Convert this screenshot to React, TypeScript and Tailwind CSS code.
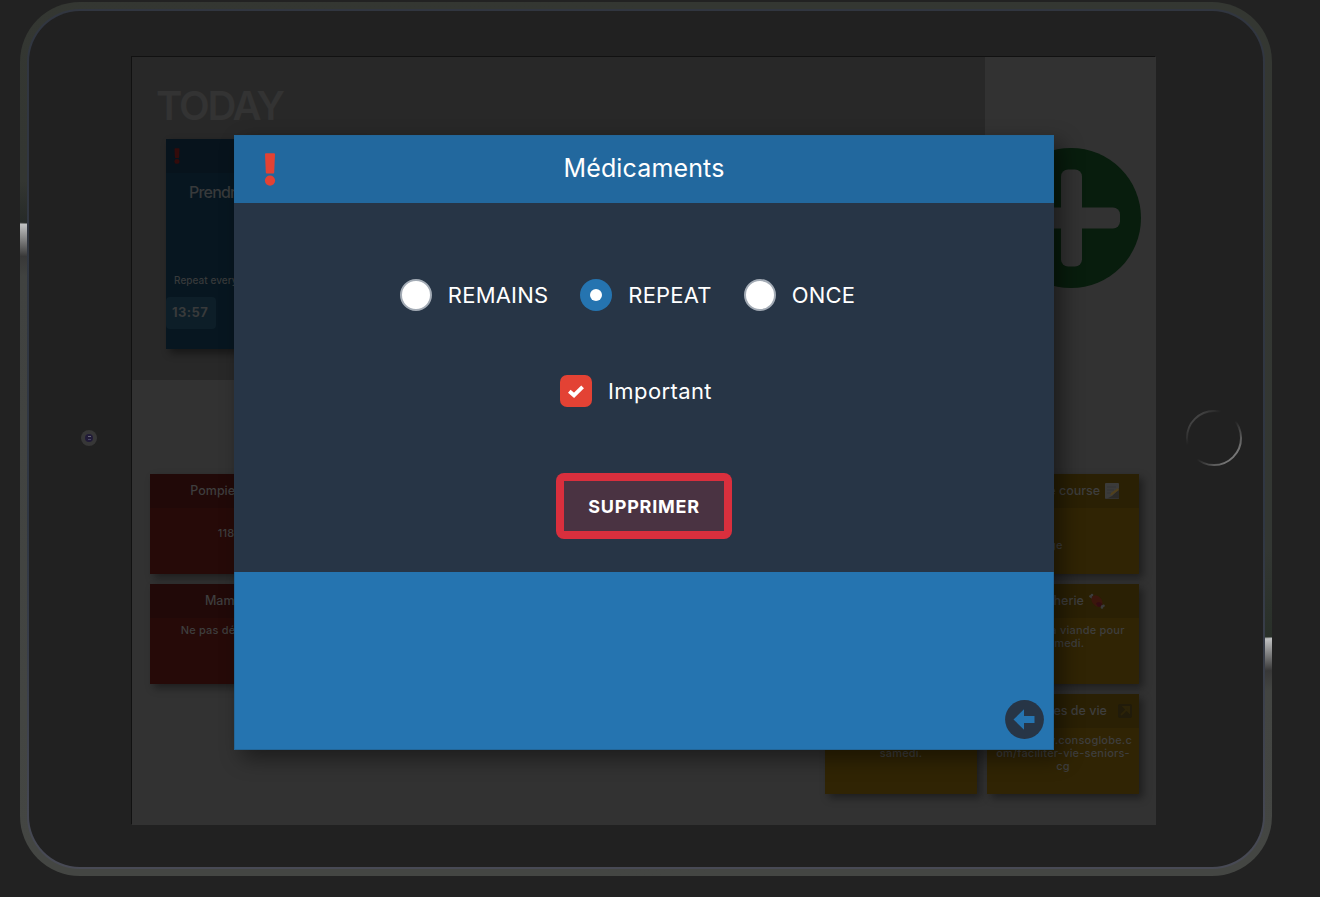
import type { ReactNode } from "react";

function Exclamation({ className }: { className: string }) {
  return (
    <svg viewBox="0 0 12 33" preserveAspectRatio="none" className={className} fill="currentColor">
      <path d="M2 0.3h8q1 0 1 1l-.8 18.2q0 1-1 1H2.800q-1 0-1-1L1 1.300q0-1 1-1z" />
      <circle cx="6" cy="27.600" r="5.100" />
    </svg>
  );
}

function NoteCard({
  title,
  icon,
  tone,
  children,
  body,
}: {
  title: string;
  icon?: ReactNode;
  tone: "red" | "yellow";
  children: ReactNode;
  body: string;
}) {
  const bg = tone === "red" ? "bg-[#260a08]" : "bg-[#302404]";
  const head = tone === "red" ? "bg-[#210908]" : "bg-[#2a2004]";
  return (
    <article className={`h-[100px] w-[152px] shrink-0 text-[#3e3e3e] shadow-[4px_4px_8px_rgba(0,0,0,0.4)] ${bg}`}>
      <header className={`flex h-[34px] items-center justify-center gap-[5px] pl-[2px] text-[12.5px] font-medium whitespace-nowrap ${head}`}>
        <span>{title}</span>
        {icon}
      </header>
      <div className={`text-[11px] leading-[13px] font-medium tracking-[0.2px] whitespace-nowrap ${body}`}>{children}</div>
    </article>
  );
}

const memo = (
  <svg className="h-4 w-[14px]" viewBox="0 0 14 16">
    <rect width="14" height="16" rx="1" fill="#3b3b3a" />
    <path d="M2 4h9M2 7h7M2 10h4" stroke="#343434" />
    <path d="M0 15.500Q8 15 14 5v9.500q0 1-1 1z" fill="#2b2926" />
    <path d="M5 13l1-3 7-5 1 2-7 5z" fill="#51401c" />
  </svg>
);
const meat = (
  <svg className="h-4 w-4" viewBox="0 0 16 16">
    <path d="M1 3l13 11" stroke="#3b3b3b" strokeWidth="2" />
    <circle cx="1.500" cy="3.200" r="1.300" fill="#3b3b3b" />
    <circle cx="3" cy="2" r="1.300" fill="#3b3b3b" />
    <circle cx="14.500" cy="12.800" r="1.300" fill="#3b3b3b" />
    <circle cx="13" cy="14.500" r="1.300" fill="#3b3b3b" />
    <path d="M2.500 5Q4 1 9 3q5 3 4.500 8-2.500 4.500-7 2Q1.500 9 2.500 5z" fill="#3b160c" />
    <path d="M7 10.500q2-2.500 6 0-1 4-4 3z" fill="#330c13" />
  </svg>
);
const link = (
  <svg className="ml-[6px] h-[14px] w-[14px]" viewBox="0 0 14 14">
    <rect width="14" height="14" rx="2" fill="#211b0a" />
    <path d="M3 11l6-6M6 3h5v5z" stroke="#2c2308" strokeWidth="2" fill="#2c2308" />
  </svg>
);

function Radio({ label, checked }: { label: string; checked?: boolean }) {
  return (
    <label className="flex items-center gap-4">
      {checked ? (
        <span className="flex size-8 items-center justify-center rounded-full bg-[#2574b0]">
          <span className="size-3 rounded-full bg-white" />
        </span>
      ) : (
        <span className="size-8 rounded-full border-2 border-[#a3abb5] bg-white" />
      )}
      <span>{label}</span>
    </label>
  );
}

function ReminderDialog() {
  return (
    <section className="absolute top-[78px] left-[102px] flex h-[614.500px] w-[820px] flex-col border border-[#236698] bg-[#2574b0] text-white shadow-[8px_8px_20px_rgba(0,0,0,0.45)]">
      <header className="relative flex h-[67px] shrink-0 items-center justify-center bg-[#22689e] text-[25px] tracking-[0.15px]">
        <Exclamation className="absolute top-[17px] left-[29px] h-[33px] w-3 text-[#e34234]" />
        <h2 className="mt-[-2px]">Médicaments</h2>
      </header>
      <div className="-mx-px flex h-[369px] shrink-0 flex-col items-center bg-[#273546] text-[22px] tracking-[0.4px]">
        <div className="mt-[76px] mr-[33px] flex h-8 items-center gap-8 tracking-[0.2px]">
          <Radio label="REMAINS" />
          <Radio label="REPEAT" checked />
          <Radio label="ONCE" />
        </div>
        <label className="mt-16 mr-4 flex h-8 items-center gap-4">
          <span className="flex size-8 items-center justify-center rounded-[7px] bg-[#e34234]">
            <svg className="h-[13px] w-4" viewBox="0 0 16 13">
              <path d="M1.300 6.200L6 10.300 14.600 1.800" fill="none" stroke="white" strokeWidth="3.900" />
            </svg>
          </span>
          <span>Important</span>
        </label>
        <button className="mt-[66px] flex h-[66px] w-[176px] items-center justify-center rounded-[8px] bg-[#d92f3d] p-2">
          <span className="flex h-full w-full items-center justify-center bg-[#4a3342] text-[18px] font-bold tracking-[0.75px]">SUPPRIMER</span>
        </button>
      </div>
      <footer className="flex flex-1 items-end justify-end pr-[9px] pb-[10px]">
        <svg className="size-[39px]" viewBox="0 0 39 39">
          <circle cx="19.500" cy="19.500" r="19.400" fill="#273546" />
          <path d="M8.500 19.500L19 9.300V16h10.500v7H19v6.700z" fill="#2574b0" />
        </svg>
      </footer>
    </section>
  );
}

function Screen() {
  return (
    <main className="relative h-[768px] w-[1024px] shrink-0 bg-[#323232] shadow-[-1px_-1px_0_#111]">
      <div className="flex h-[323px]">
        <section className="w-[853px] bg-[#282828] pt-[24px] pl-6">
          <h1 className="h-[49px] text-[40px] leading-[49px] font-semibold tracking-[-2.2px] text-[#333333]">TODAY</h1>
          <article className="mt-[9px] ml-[10px] flex h-[210px] w-[200px] flex-col bg-[#071620] font-medium text-[#383a3b] shadow-[4px_4px_8px_rgba(0,0,0,0.45)]">
            <header className="h-[34px] shrink-0 bg-[#07131c] pt-[9px] pl-2">
              <Exclamation className="h-4 w-[6px] text-[#330b0b]" />
            </header>
            <p className="mt-[7px] pl-[23px] text-[16px] leading-6 tracking-[-0.8px]">Prendre</p>
            <p className="mt-[67px] pl-2 text-[10px] leading-[18px] tracking-[0.05px]">Repeat every day</p>
            <p className="mt-2 flex h-8 w-[50px] items-center rounded-[4px] bg-[#0d1e28] pl-[6px] text-[13px] font-bold tracking-[0.4px]">13:57</p>
          </article>
        </section>
        <aside className="flex flex-1 justify-center pt-[91px]">
          <svg className="size-[140px]" viewBox="0 0 140 140">
            <circle cx="70" cy="70" r="70" fill="#081d0d" />
            <rect x="60" y="21.500" width="21" height="97" rx="7" fill="#323232" />
            <rect x="22" y="59.500" width="97" height="21" rx="7" fill="#323232" />
          </svg>
        </aside>
      </div>
      <div className="flex justify-between pt-[94px] pr-[17px] pl-[18px]">
        <div className="flex flex-col gap-[10px]">
          <NoteCard tone="red" title="Pompiers" icon={<span className="w-3" />} body="pt-[19px] text-center">118</NoteCard>
          <NoteCard tone="red" title="Maman" body="pt-[6px] text-center">Ne pas déranger</NoteCard>
        </div>
        <div className="flex gap-[10px]">
          <div className="flex flex-col justify-end">
            <NoteCard tone="yellow" title="Boucherie" body="pt-[6px] text-center">
              Acheter la viande pour<br />samedi.
            </NoteCard>
          </div>
          <div className="flex flex-col gap-[10px]">
            <NoteCard tone="yellow" title="Liste de course" icon={memo} body="pt-[31px] pl-[28px]">Fromage</NoteCard>
            <NoteCard tone="yellow" title="Boucherie" icon={meat} body="pt-[6px] text-center">
              Acheter la viande pour<br />samedi.
            </NoteCard>
            <NoteCard tone="yellow" title="Les astuces de vie" icon={link} body="pt-[6px] text-center">
              http://www.consoglobe.c<br />om/faciliter-vie-seniors-<br />cg
            </NoteCard>
          </div>
        </div>
      </div>
      <ReminderDialog />
    </main>
  );
}

export default function App() {
  return (
    <div className="h-[897px] w-[1320px] overflow-hidden bg-[#222222] pt-[2px] pl-5 font-['Inter',sans-serif]">
      <div className="h-[874px] w-[1252px] rounded-[60px] bg-[linear-gradient(182deg,#343732_0px,#333632_201px,#262a28_242px,#c0c1c2_244px,#383838_276px,#404240_296px,#444643_874px),linear-gradient(178deg,#343732_0px,#333733_570px,#293029_656px,#c0c1c2_658px,#383838_690px,#434542_710px,#444643_874px)] bg-[size:50%_100%] bg-[position:left_top,right_top] bg-no-repeat p-[7px]">
        <div className="h-full w-full rounded-[53px] bg-[linear-gradient(#313640,#303743_60%,#484a55)] p-[2px]">
          <div className="flex h-full w-full items-start rounded-[51px] bg-[#212121] pt-[46px] pl-[52px]">
            <span className="mt-[373px] flex size-4 items-center justify-center rounded-full bg-[#373737]">
              <span className="flex size-2 flex-col items-center justify-center gap-[2px] rounded-full bg-[#211b38]">
                <span className="h-px w-[3px] bg-[#666575]" />
                <span className="h-px w-[3px] bg-[#484665]" />
              </span>
            </span>
            <div className="ml-[35px]">
              <Screen />
            </div>
            <svg className="mt-[353px] ml-[30px] size-14 shrink-0" viewBox="0 0 56 56">
              <defs>
                <linearGradient id="ring" x1="0" y1="0" x2="1" y2="1">
                  <stop offset="0.12" stopColor="#484848" />
                  <stop offset="0.32" stopColor="#212121" />
                  <stop offset="0.54" stopColor="#212121" />
                  <stop offset="0.85" stopColor="#777777" />
                </linearGradient>
              </defs>
              <circle cx="28" cy="28" r="27" fill="none" stroke="url(#ring)" strokeWidth="2" />
            </svg>
          </div>
        </div>
      </div>
    </div>
  );
}
